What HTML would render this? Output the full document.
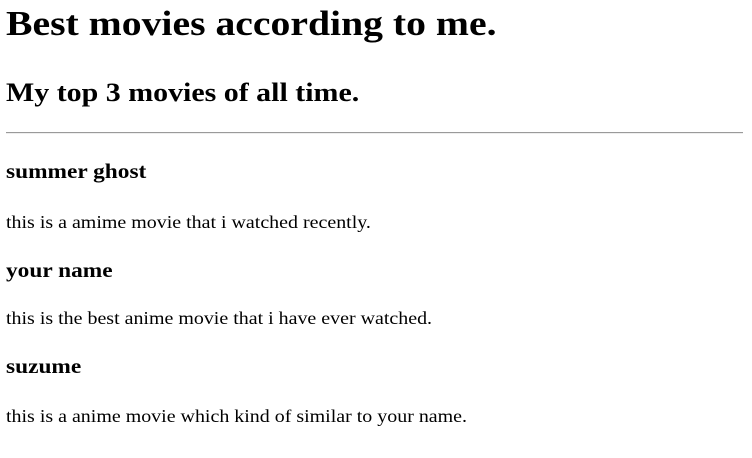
<!DOCTYPE html>
<html><head><meta charset="utf-8"><style>
html,body{margin:0;padding:0;background:#fff;width:752px;height:458px;overflow:hidden}
body{font-family:"Liberation Serif",serif;color:#000;position:relative}
.t{position:absolute;left:6px;margin:0;white-space:nowrap;transform:scaleX(1.134);transform-origin:0 0}
.h1{font-size:35px;line-height:35px;font-weight:bold;top:6px}
.h2{font-size:26.4px;line-height:26.4px;font-weight:bold;top:78.5px}
.h3{font-size:20.6px;line-height:20.6px;font-weight:bold}
.p{font-size:17.6px;line-height:17.6px}
.hr{position:absolute;left:6px;width:737px;top:132px;height:0;border-top:1px solid #9a9a9a;border-bottom:1px solid #eee}
</style></head><body>
<div class="t h1">Best movies according to me.</div>
<div class="t h2">My top 3 movies of all time.</div>
<div class="hr"></div>
<div class="t h3" style="top:162px">summer ghost</div>
<div class="t p" style="top:213.5px">this is a amime movie that i watched recently.</div>
<div class="t h3" style="top:261px">your name</div>
<div class="t p" style="top:310px">this is the best anime movie that i have ever watched.</div>
<div class="t h3" style="top:357px">suzume</div>
<div class="t p" style="top:407.5px">this is a anime movie which kind of similar to your name.</div>
</body></html>
